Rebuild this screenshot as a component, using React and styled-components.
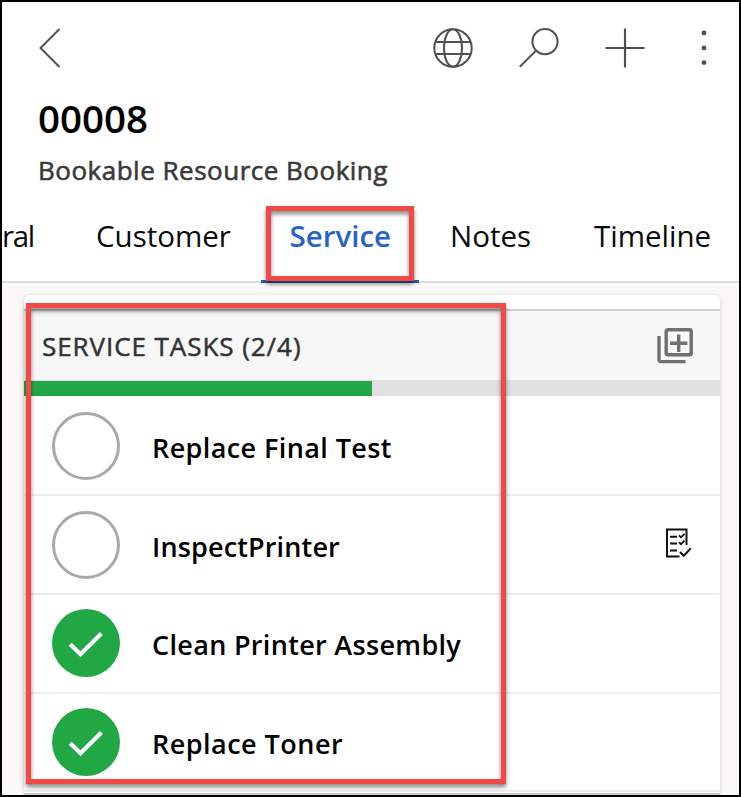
import React from 'react';
import styled, { createGlobalStyle } from 'styled-components';

const GlobalStyle = createGlobalStyle`
  *, *::before, *::after { box-sizing: border-box; }
  body { margin: 0; background: #fff; font-family: "Open Sans", "Noto Sans", sans-serif; }
`;

const Screen = styled.main`
  position: relative;
  width: 741px;
  height: 797px;
  overflow: hidden;
  border: 2px solid #000;
  background: #faf9f8;
  display: flex;
  flex-direction: column;
`;

const Header = styled.header`
  flex: none;
  height: 281px;
  background: #fff;
  border-bottom: 2px solid #dcdcdc;
`;

const Toolbar = styled.div`
  height: 91px;
  padding: 0 32px 0 36px;
  display: flex;
  align-items: center;
`;

const IconButton = styled.button`
  display: flex;
  padding: 0;
  border: 0;
  background: none;
  color: #505050;
  margin-left: ${(p) => p.$gap || 0}px;
`;

const Spacer = styled.div`
  flex: 1;
`;

const Title = styled.h1`
  margin: 0;
  padding-left: 36px;
  height: 50px;
  font-size: 38.5px;
  line-height: 51px;
  font-weight: 600;
  color: #000;
`;

const Subtitle = styled.p`
  margin: 0;
  padding: 9px 0 0 36px;
  height: 52px;
  font-size: 26px;
  line-height: 36px;
  color: #3b3a39;
  letter-spacing: 0.5px;
  -webkit-text-stroke: 0.6px currentColor;
`;

const Tabs = styled.nav`
  display: flex;
  height: 88px;
  white-space: nowrap;
`;

const Tab = styled.a`
  flex: none;
  width: ${(p) => p.$width}px;
  height: 88px;
  padding-left: ${(p) => p.$inset}px;
  font-size: 29.5px;
  line-height: 82px;
  font-weight: ${(p) => (p.$active ? 600 : 400)};
  letter-spacing: ${(p) => p.$spacing || 0}px;
  color: ${(p) => (p.$active ? '#2b62c9' : '#0a0a0a')};
  border-bottom: ${(p) => (p.$active ? '3px solid #2b5da8' : '0')};
`;

const Card = styled.section`
  flex: none;
  width: 696px;
  height: 499px;
  margin: 12px 0 0 22px;
  padding-top: 14px;
  background: #fff;
  border-radius: 5px 5px 0 0;
  box-shadow: 0 1px 5px rgba(0, 0, 0, 0.16);
`;

const CardHeader = styled.div`
  height: 71px;
  padding: 0 27px 0 18px;
  display: flex;
  justify-content: space-between;
  border-top: 2px solid #cecece;
  background: #f7f7f7;
`;

const CardTitle = styled.h2`
  margin: 0;
  font-size: 26px;
  line-height: 70px;
  font-weight: 400;
  color: #333;
  letter-spacing: 0.94px;
  -webkit-text-stroke: 0.5px currentColor;
`;

const AddButton = styled(IconButton)`
  color: #707070;
  height: 36px;
  margin-top: 17px;
`;

const Progress = styled.div`
  height: 16px;
  padding-top: 1px;
  background: #e0e0e0;
`;

const ProgressFill = styled.div`
  width: 348px;
  height: 15px;
  background: #21a743;
`;

const TaskList = styled.ul`
  margin: 0;
  padding: 1.5px 0 0;
  list-style: none;
`;

const Task = styled.li`
  display: flex;
  align-items: center;
  height: 98.7px;
  padding: 0 28px;
  border-bottom: 2px solid #eee;
`;

const Status = styled.span`
  flex: none;
  display: flex;
  align-items: center;
  justify-content: center;
  width: 68px;
  height: 68px;
  border-radius: 50%;
  border: ${(p) => (p.$done ? '0' : '3px solid #a9a9a9')};
  background: ${(p) => (p.$done ? '#21a743' : '#fff')};
`;

const TaskName = styled.span`
  flex: 1;
  padding: 4px 0 0 32px;
  font-size: 27px;
  line-height: 36px;
  font-weight: 600;
  color: #000;
  white-space: nowrap;
  letter-spacing: ${(p) => p.$spacing}px;
`;

const TrailingIcon = styled.span`
  display: flex;
  margin-top: -4px;
`;

const CardFooter = styled.div`
  height: 2px;
  margin-top: 1px;
  background: #c9c9c9;
`;

const Highlight = styled.div`
  position: absolute;
  left: ${(p) => p.$x}px;
  top: ${(p) => p.$y}px;
  width: ${(p) => p.$w}px;
  height: ${(p) => p.$h}px;
  border: 5px solid #f04946;
  filter: drop-shadow(0 3px 2px rgba(0, 0, 0, 0.5));
  pointer-events: none;
`;

const BackIcon = () => (
  <svg width="24" height="42" viewBox="0 0 24 42" fill="none" stroke="currentColor" strokeWidth="2">
    <path d="M21.5 2 2.5 21l19 19" />
  </svg>
);

const GlobeIcon = () => (
  <svg width="40" height="40" viewBox="0 0 40 40" fill="none" stroke="currentColor" strokeWidth="2">
    <circle cx="20" cy="20" r="18.7" />
    <ellipse cx="20" cy="20" rx="9" ry="18.7" />
    <path d="M2.5 14h35M2.5 26h35" />
  </svg>
);

const SearchIcon = () => (
  <svg width="40" height="40" viewBox="0 0 40 40" fill="none" stroke="currentColor" strokeWidth="2">
    <circle cx="26" cy="13.6" r="12.6" />
    <path d="M17 22.6.8 38.8" />
  </svg>
);

const PlusIcon = () => (
  <svg width="40" height="40" viewBox="0 0 40 40" fill="none" stroke="currentColor" strokeWidth="2.2">
    <path d="M20 .5v39M.5 20h39" />
  </svg>
);

const MoreIcon = () => (
  <svg width="6" height="40" viewBox="0 0 6 40" fill="currentColor">
    <circle cx="3" cy="5" r="2.4" />
    <circle cx="3" cy="20" r="2.4" />
    <circle cx="3" cy="34.6" r="2.4" />
  </svg>
);

const AddCopyIcon = () => (
  <svg width="36" height="36" viewBox="0 0 36 36" fill="none" stroke="currentColor" strokeWidth="3.4">
    <rect x="9.2" y="1.8" width="25" height="25" rx="1.6" />
    <path d="M21.7 6.6V24M13 15.3h17.4" />
    <path d="M2 8v24a1.6 1.6 0 0 0 1.6 1.6H28.5" />
  </svg>
);

const CheckIcon = () => (
  <svg width="36" height="28" viewBox="0 0 36 28" fill="none" stroke="#fff" strokeWidth="4.2">
    <path d="M2.2 15.2 12.5 25.2 33.4 4.6" />
  </svg>
);

const ChecklistIcon = () => (
  <svg width="26" height="30" viewBox="0 0 26 30" fill="none" stroke="#111" strokeWidth="2">
    <g transform="translate(-.5 -2)">
      <path d="M21 19V3.5H1.5v27H14" />
      <path d="M4.5 10.7h7M4.5 17.6h7M4.5 24.4h7" />
      <path d="m13.5 9.3 2 2L19 7.8M13.5 16.2l2 2 3.5-3.5" strokeWidth="1.8" />
      <path d="m14.5 26 3.8 3.7 7-7.5" />
    </g>
  </svg>
);

const tasks = [
  { name: 'Replace Final Test', done: false, spacing: 0.4 },
  { name: 'InspectPrinter', done: false, checklist: true, spacing: 0.15 },
  { name: 'Clean Printer Assembly', done: true, spacing: 0.32 },
  { name: 'Replace Toner', done: true, spacing: 0.48 },
];

export default function App() {
  return (
    <>
      <GlobalStyle />
      <Screen>
        <Header>
          <Toolbar>
            <IconButton aria-label="Back"><BackIcon /></IconButton>
            <Spacer />
            <IconButton aria-label="Language"><GlobeIcon /></IconButton>
            <IconButton aria-label="Search" $gap={46}><SearchIcon /></IconButton>
            <IconButton aria-label="New" $gap={46}><PlusIcon /></IconButton>
            <IconButton aria-label="More" $gap={56}><MoreIcon /></IconButton>
          </Toolbar>
          <Title>00008</Title>
          <Subtitle>Bookable Resource Booking</Subtitle>
          <Tabs>
            <Tab $width={66} $inset={0} $spacing={-1.4}>ral</Tab>
            <Tab $width={193} $inset={28}>Customer</Tab>
            <Tab $width={158} $inset={28.5} $active>Service</Tab>
            <Tab $width={143} $inset={31}>Notes</Tab>
            <Tab $width={177} $inset={32}>Timeline</Tab>
          </Tabs>
        </Header>
        <Card>
          <CardHeader>
            <CardTitle>SERVICE TASKS (2/4)</CardTitle>
            <AddButton aria-label="Add task"><AddCopyIcon /></AddButton>
          </CardHeader>
          <Progress><ProgressFill /></Progress>
          <TaskList>
            {tasks.map((t) => (
              <Task key={t.name}>
                <Status $done={t.done}>{t.done && <CheckIcon />}</Status>
                <TaskName $spacing={t.spacing}>{t.name}</TaskName>
                {t.checklist && <TrailingIcon><ChecklistIcon /></TrailingIcon>}
              </Task>
            ))}
          </TaskList>
          <CardFooter />
        </Card>
        <Highlight $x={264} $y={204} $w={148} $h={75} />
        <Highlight $x={24} $y={301} $w={480} $h={481} />
      </Screen>
    </>
  );
}
